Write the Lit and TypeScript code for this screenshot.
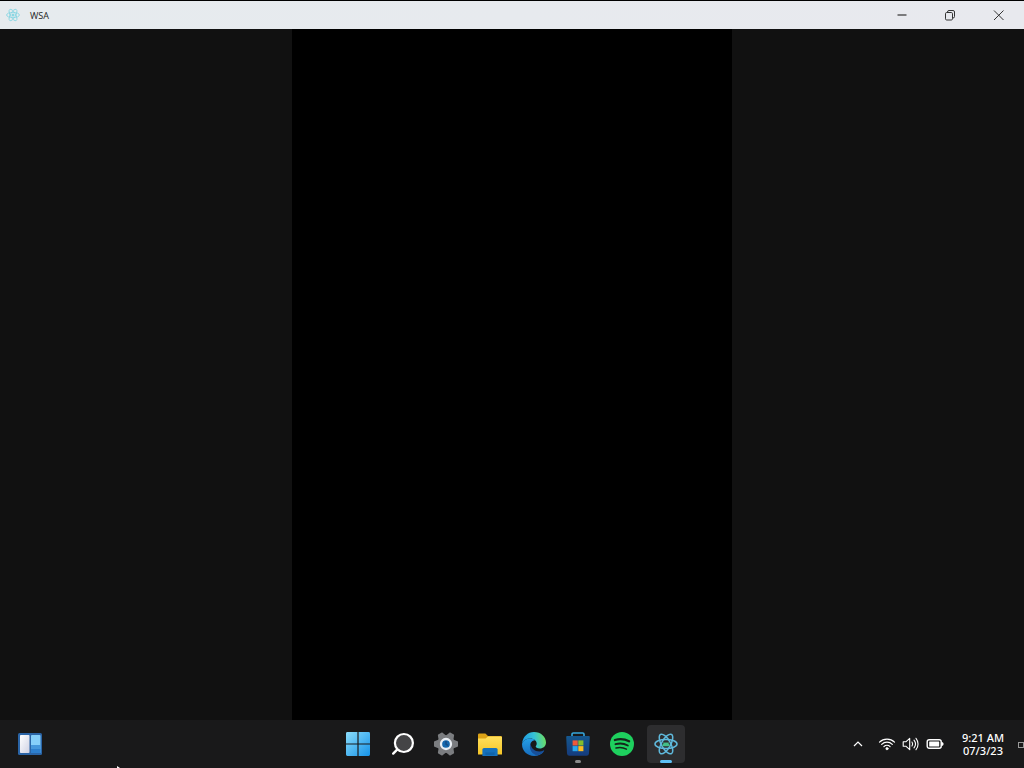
import { LitElement, html, svg, css } from "lit";
import { customElement } from "lit/decorators.js";

const atom = (color: string, robot = false) => svg`
  <g fill="none" stroke=${color} stroke-width="1.5">
    <ellipse cx="12" cy="12" rx="11" ry="4.5"/>
    <ellipse cx="12" cy="12" rx="11" ry="4.5" transform="rotate(60 12 12)"/>
    <ellipse cx="12" cy="12" rx="11" ry="4.5" transform="rotate(120 12 12)"/>
  </g>
  ${robot
    ? svg`<path d="M8.300 14.200a3.700 3.700 0 0 1 7.400 0z" fill="#43bf88"/><path d="M9.500 9.900l.8 1.300M14.500 9.900l-.8 1.300" stroke="#43bf88" stroke-width=".7"/>`
    : svg`<circle cx="12" cy="12" r="2.600" fill=${color}/>`}`;

const gearTeeth = [0, 60, 120, 180, 240, 300].map(
  (a) => svg`<path d="M7.600 5L9.300.5Q9.500 0 10 0h4q.5 0 .7.5L16.400 5z" transform="rotate(${a + 30} 12 12)"/>`
);

const icons = {
  start: svg`
    <defs><linearGradient id="win" gradientUnits="userSpaceOnUse" x1="0" y1="0" x2="24" y2="24"><stop stop-color="#8bddfb"/><stop offset="1" stop-color="#1592e8"/></linearGradient></defs>
    <path fill="url(#win)" d="M1.400 0H11.400V11.400H0V1.400A1.400 1.400 0 0 1 1.400 0zM12.600 0H22.600A1.400 1.400 0 0 1 24 1.400V11.400H12.600zM0 12.600H11.400V24H1.400A1.400 1.400 0 0 1 0 22.600zM12.600 12.600H24V22.600A1.400 1.400 0 0 1 22.600 24H12.600z"/>`,
  search: svg`
    <path d="M7.600 17.200L3.200 21.600" stroke="#fff" stroke-width="2.400" stroke-linecap="round"/>
    <circle cx="13.900" cy="11" r="9" fill="#444446" stroke="#fff" stroke-width="2.200"/>`,
  settings: svg`
    <g fill="#7b7d80">${gearTeeth}<circle cx="12" cy="12" r="8.800"/></g>
    <circle cx="12" cy="12" r="5" fill="#1467ad" stroke="#e9eef4" stroke-width="2.300"/>
    <path d="M12 9v3l2 1.500" fill="none" stroke="#164b85" stroke-width="1.500"/>`,
  files: svg`
    <defs><linearGradient id="folder" x1="0" y1="0" x2="0" y2="1"><stop stop-color="#ffe05d"/><stop offset="1" stop-color="#f6c526"/></linearGradient></defs>
    <path d="M0 2.800a1.200 1.200 0 0 1 1.200-1.200H7.400L10 4h12.800A1.200 1.200 0 0 1 24 5.200V10H0z" fill="#dca216"/>
    <path d="M0 6.400h7.600L10 4.400h12.800A1.200 1.200 0 0 1 24 5.600v17H0z" fill="url(#folder)"/>
    <path d="M4.400 24v-6.400A1.600 1.600 0 0 1 6 16h12a1.600 1.600 0 0 1 1.600 1.600V24z" fill="#1471bd"/>
    <path d="M7.400 23v-2.600h9.200V23z" fill="#0f64ab"/>`,
  edge: svg`
    <defs>
      <linearGradient id="e1" x1="0" y1=".3" x2="1" y2=".2"><stop stop-color="#1e9be5"/><stop offset=".5" stop-color="#35c1d6"/><stop offset="1" stop-color="#6fe05b"/></linearGradient>
      <linearGradient id="e2" x1="0" y1="0" x2="0" y2="1"><stop stop-color="#259fe6"/><stop offset="1" stop-color="#166cbe"/></linearGradient>
    </defs>
    <path d="M.1 11.400C.8 4.700 5.800 0 12 0c7 0 12 5 12 10.400 0 3.700-2.900 6-6.200 6-2.900 0-4.100-1-4.100-1.800 0-.7 1-1.100 1-3 0-2.800-2.900-5-6.300-5C4.700 6.600 1.400 8.600.100 11.400z" fill="url(#e1)"/>
    <path d="M.1 11.400C1.400 8.600 4.700 6.600 8.400 6.600c2.300 0 3.800.8 4.600 1.700-3 .2-4.800 2.700-4.800 5.500 0 4 3.200 7.400 7.600 7.400 2.300 0 4.600-.9 6.100-2C19.800 22.200 16.200 24 12 24 5.200 24-.6 18.700.100 11.400z" fill="url(#e2)"/>
    <path d="M8.400 11.400c-2 6 2 11.300 7.400 11.800 2.800-.7 5-2.300 6.300-4.300.3-.5-.1-.8-.6-.5-1.300.7-2.700 1-4.200 1-4.600 0-8.300-3.200-8.900-8z" fill="#174f99"/>`,
  store: svg`
    <defs><linearGradient id="bag" x1="0" y1="0" x2="0" y2="1"><stop stop-color="#15588f"/><stop offset="1" stop-color="#153b7c"/></linearGradient></defs>
    <path d="M6 5V2.300A1.300 1.300 0 0 1 7.300 1h9.400a1.300 1.300 0 0 1 1.300 1.300V5" fill="none" stroke="#36a9df" stroke-width="1.600"/>
    <path d="M1.200 4h21.600a1 1 0 0 1 1 1.100L23 21.500a2.500 2.500 0 0 1-2.500 2.300h-17A2.500 2.500 0 0 1 1 21.500L.2 5.100a1 1 0 0 1 1-1.100z" fill="url(#bag)"/>
    <path d="M6.600 8.400h5.100v5.100H6.600z" fill="#ef5939"/><path d="M12.300 8.400h5.100v5.100h-5.100z" fill="#83bd2c"/>
    <path d="M6.600 14.100h5.100v5.100H6.600z" fill="#27a7ee"/><path d="M12.300 14.100h5.100v5.100h-5.100z" fill="#fdbc20"/>`,
  spotify: svg`
    <circle cx="12" cy="12" r="12" fill="#1ed05e"/>
    <g fill="none" stroke="#15251b" stroke-linecap="round">
      <path d="M4.900 8c4.700-1.300 10-.9 14.200 1.300" stroke-width="2.300"/>
      <path d="M5.500 12.200c4.100-1.200 8.700-.7 12.300 1.300" stroke-width="1.900"/>
      <path d="M6 16c3.600-.9 7.200-.6 10.400 1.200" stroke-width="1.500"/>
    </g>`,
  wsa: atom("#5fb9dc", true),
};

type App = { id: keyof typeof icons; name: string; state?: "open" | "active" };
const apps: App[] = [
  { id: "start", name: "Start" },
  { id: "search", name: "Search" },
  { id: "settings", name: "Settings" },
  { id: "files", name: "File Explorer" },
  { id: "edge", name: "Edge" },
  { id: "store", name: "Store", state: "open" },
  { id: "spotify", name: "Spotify" },
  { id: "wsa", name: "WSA", state: "active" },
];

const reset = css`
  :host { display: block; font-family: "Noto Sans", "Open Sans", sans-serif; }
  * { box-sizing: border-box; }
  button { border: 0; padding: 0; background: none; color: inherit; font: inherit; display: flex; align-items: center; justify-content: center; }
  svg { display: block; flex: none; }
`;

@customElement("app-window")
export class AppWindow extends LitElement {
  static styles = [reset, css`
    :host { display: flex; flex-direction: column; min-height: 0; background: #111; }
    .titlebar { display: flex; align-items: stretch; height: 29px; border-top: 1px solid #000; background: linear-gradient(90deg, #e6ebee, #e8e9ee); color: #222; padding: 0 2px 0 6px; }
    .title { display: flex; align-items: center; gap: 10px; flex: 1; margin: 0; font-family: "Open Sans", "Noto Sans", sans-serif; font-size: 9px; font-weight: 400; }
    .controls { display: flex; }
    .controls button { width: 48px; }
    .body { flex: 1; display: flex; justify-content: center; min-height: 0; }
    .screen { width: 440px; max-width: 100%; background: #000; }
  `];

  render() {
    return html`
      <header class="titlebar">
        <h1 class="title"><svg width="14" height="14" viewBox="0 0 24 24">${atom("#8ad6e2")}</svg>WSA</h1>
        <div class="controls">
          <button aria-label="Minimize"><svg width="12" height="12" viewBox="0 0 12 12"><path d="M1.500 6h9" stroke="#333" stroke-width="1.200"/></svg></button>
          <button aria-label="Restore"><svg width="12" height="12" viewBox="0 0 12 12" fill="none" stroke="#333"><rect x="1.500" y="3.500" width="7" height="7.500" rx="1.200"/><path d="M3.500 3.200V3A1.500 1.500 0 0 1 5 1.500h4A1.500 1.500 0 0 1 10.500 3v4.500A1.500 1.500 0 0 1 9 9"/></svg></button>
          <button aria-label="Close"><svg width="12" height="12" viewBox="0 0 12 12"><path d="M2 1.500l9.500 9.500M11.500 1.500L2 11" stroke="#333"/></svg></button>
        </div>
      </header>
      <main class="body"><div class="screen"></div></main>`;
  }
}

@customElement("task-bar")
export class TaskBar extends LitElement {
  static styles = [reset, css`
    :host { position: relative; display: grid; grid-template-columns: 1fr auto 1fr; align-items: center; height: 48px; background: #19191a; color: #fff; }
    .widgets { width: 38px; height: 38px; margin-left: 11px; }
    .apps { display: flex; gap: 6px; }
    .app { position: relative; width: 38px; height: 38px; border-radius: 4px; }
    .app.active { background: #2d2d2f; }
    .app.open::after, .app.active::after { content: ""; position: absolute; bottom: 0; width: 6px; height: 3px; border-radius: 2px; background: #8b8b8b; }
    .app.active::after { width: 12px; background: #5ec0f5; }
    .tray { display: flex; align-items: center; justify-content: flex-end; }
    .chevron { width: 24px; height: 38px; margin-right: 8px; }
    .status { display: flex; gap: 6px; height: 38px; }
    .clock { flex-direction: column; align-items: center; margin: 0 13px 0 18px; font-size: 11px; line-height: 13px; font-weight: 500; }
    .desktop { width: 7px; height: 38px; }
    .pointer { position: absolute; left: 117px; bottom: 0; }
  `];

  render() {
    return html`
      <button class="widgets" aria-label="Widgets">
        <svg width="24" height="24" viewBox="0 0 24 24">
          <defs><linearGradient id="pane" x1="0" y1="0" x2="1" y2="1"><stop stop-color="#fff"/><stop offset="1" stop-color="#cfd2e4"/></linearGradient></defs>
          <rect y="1" width="24" height="22" rx="1.500" fill="#2a64a6"/>
          <rect x="2" y="3" width="9.500" height="18" rx=".8" fill="url(#pane)"/>
          <rect x="13" y="3" width="9.500" height="18" rx=".8" fill="#86cffa"/>
          <path d="M13 13h9.500v8H13z" fill="#4597dc"/><path d="M13 17h9.500v4H13z" fill="#2d7fce"/>
        </svg>
      </button>
      <nav class="apps">
        ${apps.map((a) => html`<button class="app ${a.state ?? ""}" aria-label=${a.name}><svg width="24" height="24" viewBox="0 0 24 24">${icons[a.id]}</svg></button>`)}
      </nav>
      <div class="tray">
        <button class="chevron" aria-label="Show hidden icons"><svg width="10" height="10" viewBox="0 0 10 10"><path d="M1 7L5 3 9 7" fill="none" stroke="#fff" stroke-width="1.200"/></svg></button>
        <button class="status" aria-label="Network, volume and battery">
          <svg width="18" height="16" viewBox="0 0 18 16" fill="none" stroke="#fff" stroke-width="1.200" stroke-linecap="round">
            <path d="M1.500 6.200a10.600 10.600 0 0 1 15 0M3.700 8.400a7.500 7.500 0 0 1 10.600 0M5.900 10.600a4.400 4.400 0 0 1 6.200 0"/><circle cx="9" cy="12.700" r="1.100" fill="#fff" stroke-width=".8"/>
          </svg>
          <svg width="18" height="16" viewBox="0 0 18 16" fill="none" stroke="#fff" stroke-width="1.100" stroke-linecap="round" stroke-linejoin="round">
            <path d="M1.200 5.800h2.600L7.700 2.300v11.400L3.800 10.200H1.200z"/><path d="M10 6a3.600 3.600 0 0 1 0 4M12 4.100a6.300 6.300 0 0 1 0 7.800M14 2.300a9 9 0 0 1 0 11.400"/>
          </svg>
          <svg width="18" height="16" viewBox="0 0 18 16">
            <rect x="1.200" y="3.700" width="14" height="8.600" rx="2" fill="none" stroke="#fff" stroke-width="1.400"/><rect x="3.200" y="5.500" width="10" height="5" rx=".5" fill="#fff"/><path d="M15.500 6.200a1.800 1.800 0 0 1 0 3.600z" fill="#fff" stroke="#fff" stroke-width=".6"/>
          </svg>
        </button>
        <button class="clock"><time>9:21 AM</time><time>07/3/23</time></button>
        <button class="desktop" aria-label="Show desktop"><svg width="7" height="7" viewBox="0 0 7 7"><rect x="1.500" y="1.500" width="5" height="5" fill="none" stroke="#999"/></svg></button>
      </div>
      <svg class="pointer" width="3" height="2" viewBox="0 0 3 2" aria-hidden="true"><path d="M0 0l3 2H0z" fill="#fff"/></svg>`;
  }
}

@customElement("app-root")
export class AppRoot extends LitElement {
  static styles = css`
    :host { display: grid; grid-template-rows: 1fr auto; height: 100vh; background: #111; }
  `;

  render() {
    return html`<app-window></app-window><task-bar></task-bar>`;
  }
}
